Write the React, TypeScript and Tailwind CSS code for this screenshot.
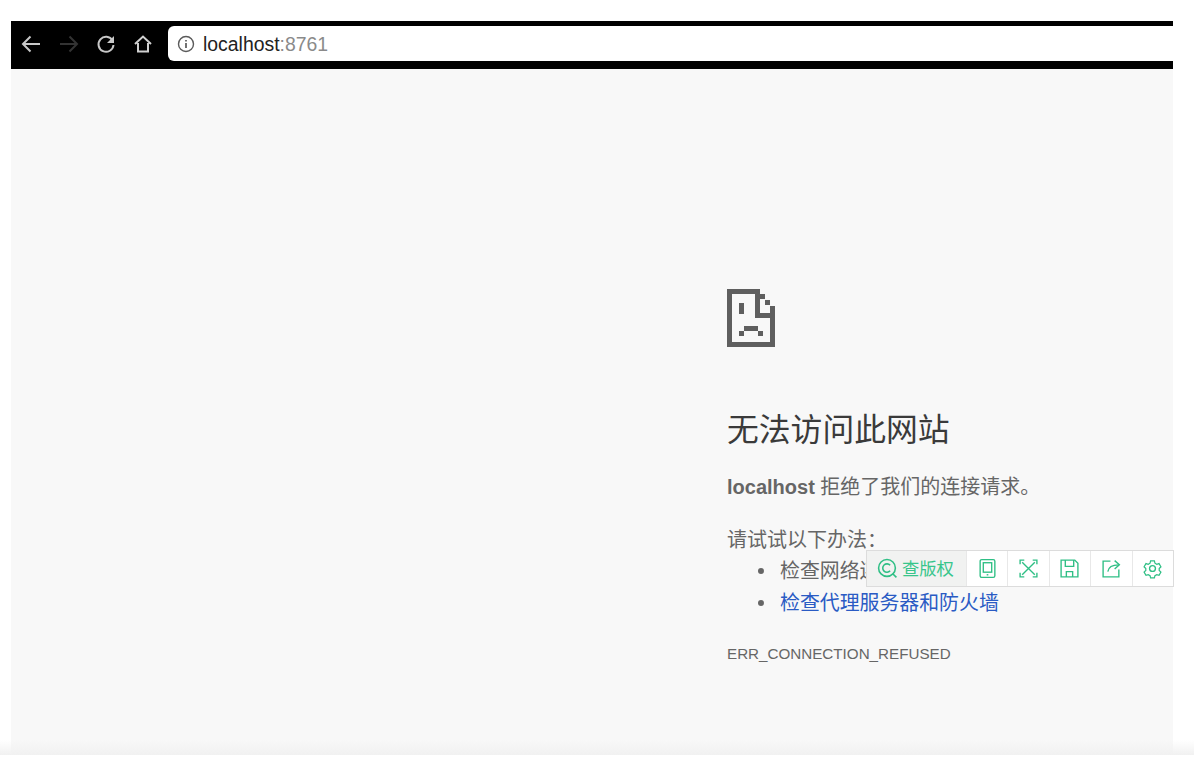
const font = "font-['Liberation_Sans','Noto_Sans_CJK_SC',sans-serif]";

function PixelFile() {
  return (
    <svg width="48" height="58" viewBox="0 0 49 58" preserveAspectRatio="none" fill="#5f5f5f" shapeRendering="crispEdges">
      <path d="M0 0h33v5H5v48h39V24h5v34H0z" />
      <path d="M29 0h5v24h15v5H29z" />
      <rect x="34" y="5" width="5" height="5" />
      <rect x="39" y="11" width="5" height="5" />
      <rect x="44" y="17" width="5" height="7" />
      <rect x="12" y="14" width="5" height="11" />
      <rect x="12" y="42" width="5" height="5" />
      <rect x="17" y="37" width="15" height="5" />
      <rect x="32" y="42" width="5" height="5" />
    </svg>
  );
}

function Divider() {
  return <div className="w-px self-stretch bg-[#e8e8e8]" />;
}

function ToolIcon({ children }: { children: React.ReactNode }) {
  return (
    <div className="flex h-full w-[41px] items-center justify-center">
      <svg width="21" height="21" viewBox="0 0 20 20" fill="none" stroke="#2fbf85" strokeWidth="1.3">
        {children}
      </svg>
    </div>
  );
}

function CopyrightBar() {
  return (
    <div className={`absolute left-[866px] top-[550px] flex h-[37px] w-[308px] items-center border border-[#dcdcdc] bg-white ${font}`}>
      <div className="flex h-full w-[100px] items-center gap-[4px] bg-[#f1f2f1] pl-[10px]">
        <svg width="21" height="21" viewBox="0 0 20 20" fill="none" stroke="#2fbf85" strokeWidth="1.5">
          <circle cx="9.5" cy="9.500" r="8" />
          <path d="M12.500 7a4 4 0 1 0 0 5.200" />
          <path d="M15 15l3.500 3.500" />
        </svg>
        <span className="relative top-[1px] text-[17.3px] leading-none text-[#37c58b]">查版权</span>
      </div>
      <Divider />
      <ToolIcon>
        <rect x="3" y="1.500" width="14" height="17" rx="1.500" />
        <rect x="6" y="4.500" width="8" height="9" />
        <path d="M9.200 16h1.600" />
      </ToolIcon>
      <Divider />
      <ToolIcon>
        <path d="M4 4l12 12M16 4L4 16" />
        <path d="M2 6V2h4M14 2h4v4M18 14v4h-4M6 18H2v-4" />
      </ToolIcon>
      <Divider />
      <ToolIcon>
        <path d="M2 2h13l3 3v13H2z" />
        <path d="M6 2v6h8V2" />
        <path d="M7 18v-5h6v5" />
      </ToolIcon>
      <Divider />
      <ToolIcon>
        <path d="M9 3H2v15h15v-7" />
        <path d="M6.500 13c.5-4 3.500-6.500 10.500-6.500" />
        <path d="M13 2.500l4.500 4-4.500 4" />
      </ToolIcon>
      <Divider />
      <ToolIcon>
        <path d="M8 2h4l.6 2.400 1.900 1.100 2.400-.7 2 3.400-1.800 1.800v2l1.800 1.800-2 3.400-2.400-.7-1.900 1.100L12 20H8l-.6-2.400-1.900-1.100-2.400.7-2-3.400 1.800-1.800v-2L1.100 8.200l2-3.400 2.400.7 1.900-1.100z" transform="translate(1 1) scale(.9)" />
        <circle cx="10" cy="10" r="2.800" />
      </ToolIcon>
    </div>
  );
}

export default function App() {
  return (
    <div className={`relative h-[773px] w-[1194px] overflow-hidden bg-white pl-[11px] pt-[21px] ${font}`}>
      <div className="w-[1162px]">
        {/* browser toolbar */}
        <div className="flex h-[48px] items-start bg-black pl-[9px] pt-[5px]">
          <div className="flex h-[35px] w-[148px] items-center">
            <svg className="mr-[16px]" width="22" height="22" viewBox="0 0 22 22" fill="none" stroke="#c8c8c8" strokeWidth="2">
              <path d="M20 11H3M10.500 3.500L3 11l7.500 7.500" />
            </svg>
            <svg className="mr-[15px]" width="22" height="22" viewBox="0 0 22 22" fill="none" stroke="#333333" strokeWidth="2">
              <path d="M2 11h17M11.500 3.500L19 11l-7.500 7.500" />
            </svg>
            <svg className="mr-[16px]" width="22" height="22" viewBox="0 0 22 22" fill="none" stroke="#c8c8c8" strokeWidth="2">
              <path d="M17.500 7.500a7.500 7.500 0 1 0 1 4.500" />
              <path d="M19 3v7h-7z" fill="#c8c8c8" stroke="none" />
            </svg>
            <svg width="20" height="20" viewBox="0 0 20 20" fill="none" stroke="#d0d0d0" strokeWidth="2">
              <path d="M2 10l8-7.500L18 10M5 9v8.500h10V9" />
            </svg>
          </div>
          <div className="flex h-[35px] flex-1 items-center rounded-l-[6px] bg-white pl-[9px]">
            <svg width="18" height="18" viewBox="0 0 18 18" fill="none" stroke="#5a5a5a" strokeWidth="1.400">
              <circle cx="9" cy="9" r="7.500" />
              <path d="M9 8v5M9 5v1.600" strokeWidth="1.700" />
            </svg>
            <span className="relative top-[1px] ml-[8px] text-[19.400px] text-[#222]">
              localhost<span className="text-[#8a8a8a]">:8761</span>
            </span>
          </div>
        </div>

        {/* error page */}
        <div className="h-[686px] bg-[#f8f8f8] pl-[716px] pt-[221px]">
          <div className="-mt-px">
            <PixelFile />
          </div>
          <h1 className="mt-[63px] text-[31.800px] font-normal leading-[40px] text-[#3a3a3a]">无法访问此网站</h1>
          <p className="mt-[22px] text-[20px] leading-[30px] text-[#666]">
            <b>localhost</b> 拒绝了我们的连接请求。
          </p>
          <p className="mt-[23px] text-[20px] leading-[30px] text-[#666]">请试试以下办法：</p>
          <ul className="pl-[31px] text-[19.900px] leading-[32px] text-[#666]">
            <li className="flex items-center gap-[16px]">
              <span className="size-[6px] rounded-full bg-[#666]" />
              检查网络连接
            </li>
            <li className="flex items-center gap-[16px]">
              <span className="size-[6px] rounded-full bg-[#666]" />
              <a className="text-[#2a5bc4]">检查代理服务器和防火墙</a>
            </li>
          </ul>
          <p className="mt-[23px] text-[15.200px] leading-[24px] text-[#666]">ERR_CONNECTION_REFUSED</p>
        </div>
      </div>
      <div className="absolute left-0 top-[740px] h-[15px] w-full bg-gradient-to-b from-transparent to-[#f1f1f1]" />
      <CopyrightBar />
    </div>
  );
}
